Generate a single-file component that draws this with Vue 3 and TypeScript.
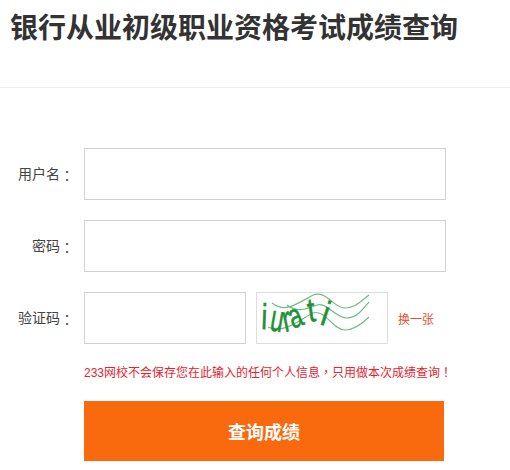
<script setup lang="ts">
const letters = [
  { k: 1, c: 'i', x: 4, y: 36, r: 2, sx: 1.1, sy: 1.5, s: 24 },
  { k: 2, c: 'u', x: 12, y: 37, r: 10, sx: 0.95, sy: 1.55, s: 24 },
  { k: 3, c: 'r', x: 28, y: 39, r: -12, sx: 1.0, sy: 1.5, s: 24 },
  { k: 4, c: 'a', x: 36, y: 36, r: -22, sx: 0.95, sy: 1.35, s: 25 },
  { k: 5, c: 't', x: 52, y: 29, r: -8, sx: 1.1, sy: 1.35, s: 25 },
  { k: 6, c: 'i', x: 62, y: 31, r: 18, sx: 1.2, sy: 1.4, s: 25 }
]
</script>

<template>
  <main class="page">
    <header class="head">
      <h1 class="title">银行从业初级职业资格考试成绩查询</h1>
    </header>
    <form class="form" @submit.prevent>
      <div class="row">
        <label class="label">用户名<span class="punct colon">：</span></label>
        <input class="field" type="text" />
      </div>
      <div class="row">
        <label class="label">密码<span class="punct colon">：</span></label>
        <input class="field" type="password" />
      </div>
      <div class="row">
        <label class="label">验证码<span class="punct colon">：</span></label>
        <input class="field short" type="text" />
        <div class="captcha">
          <svg width="130" height="50" viewBox="0 0 130 50">
            <g fill="none" stroke="#6fbd82" stroke-width="1.2">
              <path d="M15 10C28 20 38 12 56 2C70 -3 76 15 88 15C98 15 104 8 112 2" />
              <path d="M30 12C40 20 50 16 60 12C70 9 78 25 90 25C100 25 106 16 112 9" />
              <path d="M11 34C26 42 44 26 56 20C68 16 76 37 88 37C98 37 106 30 112 24" />
            </g>
            <text
              v-for="l in letters"
              :key="l.k"
              class="glyph"
              :font-size="l.s"
              :transform="`translate(${l.x} ${l.y}) rotate(${l.r}) scale(${l.sx} ${l.sy})`"
            >{{ l.c }}</text>
          </svg>
        </div>
        <a class="swap" href="#" @click.prevent>换一张</a>
      </div>
      <p class="notice">233网校不会保存您在此输入的任何个人信息<span class="punct">，</span>只用做本次成绩查询<span class="punct">！</span></p>
      <button class="submit" type="submit">查询成绩</button>
    </form>
  </main>
</template>

<style scoped>
.page {
  width: 510px;
  height: 470px;
  overflow: hidden;
  background: #fff;
  font-family: "Liberation Sans", "Noto Sans CJK SC", sans-serif;
  color: #333;
}
.head {
  height: 88px;
  padding: 0 10px;
  box-sizing: border-box;
  border-bottom: 1px solid #eee;
}
.title {
  margin: 0;
  padding-top: 9px;
  font-size: 28px;
  line-height: 40px;
  font-weight: 700;
  color: #333;
  white-space: nowrap;
}
.punct {
  font-family: "Noto Sans CJK TC", sans-serif;
}
.colon {
  vertical-align: -2px;
}
.form {
  padding-top: 60px;
  display: flex;
  flex-direction: column;
}
.row {
  display: flex;
  align-items: center;
  height: 52px;
  margin-bottom: 20px;
}
.row:nth-of-type(3) {
  margin-bottom: 0;
}
.label {
  width: 74px;
  margin-right: 10px;
  text-align: right;
  font-size: 14px;
  color: #444;
  white-space: nowrap;
}
.field {
  width: 362px;
  height: 52px;
  box-sizing: border-box;
  border: 1px solid #d2d2d2;
  background: #fff;
  outline: none;
  padding: 0 10px;
}
.short {
  width: 162px;
}
.captcha {
  width: 132px;
  height: 52px;
  margin-left: 10px;
  box-sizing: border-box;
  border: 1px solid #ddd;
}
.captcha svg {
  display: block;
}
.glyph {
  font-family: "Liberation Sans", sans-serif;
  font-weight: 400;
  fill: #1f8f36;
  stroke: #1f8f36;
  stroke-width: 0.4;
}
.swap {
  margin-left: 10px;
  font-size: 12px;
  color: #e8502a;
  text-decoration: none;
}
.notice {
  margin: 20px 0 0 84px;
  font-size: 12px;
  line-height: 16px;
  color: #e8222e;
  white-space: nowrap;
}
.submit {
  width: 360px;
  height: 60px;
  margin: 20px 0 0 84px;
  border: 0;
  background: #f96a0e;
  color: #fff;
  font-family: inherit;
  font-size: 18px;
  font-weight: 700;
}
</style>
